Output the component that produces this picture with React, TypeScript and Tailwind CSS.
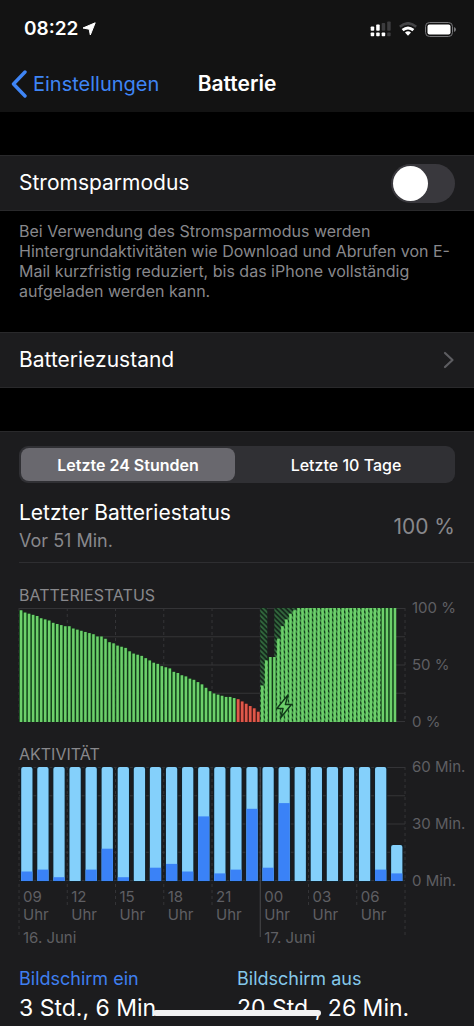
import { useState } from 'react'

// one value per quarter of an hour, in percent
const BATTERY = [
  98, 96, 95, 94, 93, 91, 90, 89, 87, 86, 85, 84, 84, 82, 81, 80, 79, 78, 77, 75, 75, 73, 70, 69,
  67, 66, 65, 62, 60, 59, 58, 56, 54, 52, 51, 49, 48, 47, 44, 43, 41, 40, 38, 37, 35, 33, 30, 27,
  25, 24, 23, 22, 22, 21, 20, 18, 16, 14, 12, 9, 32, 54, 57, 57, 73, 84, 90, 95, 98, 100, 100, 100,
  100, 100, 100, 100, 100, 100, 100, 100, 100, 100, 100, 100, 100, 100, 100, 100, 100, 100, 100, 100, 100, 100,
]

// minutes per hour: [screen on, total]
const ACTIVITY = [
  [5, 60], [6, 60], [2, 60], [0, 60], [6, 60], [17, 60], [2, 60], [0, 60],
  [7, 60], [9, 60], [5, 60], [34, 60], [4, 60], [6, 60], [38, 60], [7, 60],
  [41, 60], [0, 60], [0, 60], [0, 60], [0, 60], [0, 60], [6, 60], [4, 19],
]

const HOURS = ['09', '12', '15', '18', '21', '00', '03', '06']

const WIDTH = 384
const HEIGHT = 114
const GREEN = '#6dd06b'
const RED = '#e0584a'

const isLow = (i: number) => i > 53 && i < 60
const isCharging = (i: number) => i === 60 || i === 61 || (i > 63 && i < 90)

function Grid() {
  return (
    <g stroke="#343437" strokeWidth="1">
      {[0, 1, 2, 3, 4].map((i) => (
        <line key={`h${i}`} x1="0" x2={WIDTH} y1={0.5 + i * 28.25} y2={0.5 + i * 28.25} />
      ))}
      {[0, 1, 2, 3, 4, 5, 6, 7, 8].map((i) => (
        <line key={`v${i}`} x1={i * 48} x2={i * 48} y1="0" y2={HEIGHT} strokeDasharray="3 3" />
      ))}
    </g>
  )
}

function BatteryChart() {
  return (
    <svg
      viewBox={`0 0 ${WIDTH} ${HEIGHT}`}
      preserveAspectRatio="none"
      className="block h-[114px] w-full overflow-visible"
      role="img"
      aria-label="Batteriestatus"
    >
      <defs>
        <pattern id="hatch" width="5" height="5" patternUnits="userSpaceOnUse">
          <rect width="5" height="5" fill="#32683d" />
          <path d="M-1 -1L6 6M-1 4L1 6M4 -1L6 1" stroke="#14261b" strokeWidth="1.7" />
        </pattern>
        <pattern id="hatch-bright" width="5" height="5" patternUnits="userSpaceOnUse">
          <rect width="5" height="5" fill="#4fa653" />
          <path d="M-1 -1L6 6M-1 4L1 6M4 -1L6 1" stroke="#0f3f18" strokeWidth="1.9" />
        </pattern>
      </defs>
      <Grid />
      <rect x="240" y="0" width="7" height={HEIGHT} fill="url(#hatch)" />
      <rect x="254" y="0" width="106" height={HEIGHT} fill="url(#hatch)" />
      {BATTERY.map((value, i) => {
        const h = (value / 100) * HEIGHT
        return (
          <g key={i}>
            <rect
              x={i * 4}
              y={HEIGHT - h}
              width={i === BATTERY.length - 1 ? 3 : 4}
              height={h}
              fill={isLow(i) ? '#5a1f1c' : isCharging(i) ? 'url(#hatch-bright)' : '#12461b'}
            />
            <rect x={i * 4 + 0.8} y={HEIGHT - h} width="2.5" height={h} fill={isLow(i) ? RED : GREEN} />
          </g>
        )
      })}
      <path
        d="M267.5 87L256.500 100.500h6.200L260.500 109.500 271 96.500h-6z"
        fill={GREEN}
        stroke="#103a18"
        strokeWidth="1.4"
        strokeLinejoin="round"
      />
    </svg>
  )
}

function ActivityChart() {
  return (
    <svg
      viewBox={`0 0 ${WIDTH} ${HEIGHT}`}
      preserveAspectRatio="none"
      className="block h-[114px] w-full overflow-visible"
      role="img"
      aria-label="Aktivität"
    >
      <Grid />
      {/* ticks that run down beside the hour labels */}
      <g stroke="#343437" strokeWidth="1">
        {[0, 1, 2, 3, 4, 6, 7, 8].map((i) => (
          <line
            key={i}
            x1={i * 48}
            x2={i * 48}
            y1={HEIGHT + 3}
            y2={i % 8 === 0 ? HEIGHT + 54 : HEIGHT + 26}
            strokeDasharray="3 3"
          />
        ))}
      </g>
      {ACTIVITY.map(([on, total], i) => {
        const top = HEIGHT - (total / 60) * HEIGHT
        const onHeight = (on / 60) * HEIGHT
        const x = i * 16 + 2.2
        return (
          <g key={i}>
            <rect x={x - 1} y={top} width="13.2" height={HEIGHT - top + 1} fill="#10202a" />
            <path d={`M${x} ${HEIGHT}V${top + 2}q0 -2 2 -2h7.2q2 0 2 2V${HEIGHT}z`} fill="#84d0fb" />
            <rect x={x} y={HEIGHT - onHeight} width="11.2" height={onHeight} fill="#3a82f7" />
          </g>
        )
      })}
      <line x1="240" x2="240" y1="0" y2={HEIGHT + 56} stroke="#48484b" strokeWidth="1" />
    </svg>
  )
}

function Scale({ labels }: { labels: string[] }) {
  return (
    <div className="-my-2 flex w-[69px] shrink-0 flex-col justify-between pl-[7px] text-[15px] leading-4 text-[#5f5f63]">
      {labels.map((label) => (
        <span key={label}>{label}</span>
      ))}
    </div>
  )
}

function StatusBar() {
  return (
    <div className="flex h-[58px] items-center justify-between pl-6 pr-[18px]">
      <div className="flex items-center gap-1 text-[19px] font-semibold">
        <span>08:22</span>
        <svg width="14" height="14" viewBox="0 0 14 14" fill="#fff" aria-hidden="true">
          <path d="M13.200.8L8.300 13 7.200 7.200 1 6z" stroke="#fff" strokeWidth="1" strokeLinejoin="round" />
        </svg>
      </div>
      <div className="flex items-center gap-2">
        <svg width="21" height="16" viewBox="0 0 21 16" fill="#fff" aria-hidden="true">
          <rect x=".7" y="5.500" width="3.500" height="4.200" rx=".8" />
          <rect x="6.200" y="3.500" width="3.500" height="6.200" rx=".8" />
          <rect x="11.700" y="2" width="3.500" height="7.700" rx=".8" fill="#3c3c3e" />
          <rect x="17.200" y=".5" width="3.500" height="9.200" rx=".8" fill="#3c3c3e" />
          <rect x=".7" y="11.500" width="3.500" height="3.800" rx=".8" />
          <rect x="6.200" y="11.500" width="3.500" height="3.800" rx=".8" />
          <rect x="11.700" y="11.500" width="3.500" height="3.800" rx=".8" />
          <rect x="17.200" y="11.500" width="3.500" height="3.800" rx=".8" fill="#3c3c3e" />
        </svg>
        <svg width="18" height="14" viewBox="0 0 18 14" fill="none" aria-hidden="true">
          <path d="M.8 4.800Q9 -2.200 17.200 4.800" stroke="#454547" strokeWidth="2.600" />
          <path d="M3.600 8.200Q9 3.600 14.400 8.200" stroke="#fff" strokeWidth="2.900" />
          <path d="M6 10.600Q9 8 12 10.600L9 13.800z" fill="#fff" />
        </svg>
        <svg width="31" height="15" viewBox="0 0 31 15" aria-hidden="true">
          <rect x=".5" y=".5" width="27" height="14" rx="4" fill="none" stroke="#77777a" />
          <rect x="2.500" y="2.500" width="23" height="10" rx="2" fill="#fff" />
          <path d="M29 5q2 .8 2 2.500t-2 2.500z" fill="#77777a" />
        </svg>
      </div>
    </div>
  )
}

export default function App() {
  const [lowPower, setLowPower] = useState(false)
  const [range, setRange] = useState(0)

  return (
    <div className="h-screen overflow-hidden bg-black font-['Inter',sans-serif] text-white">
      <header className="h-28 bg-[#131313]">
        <StatusBar />
        <div className="grid h-[52px] grid-cols-[1fr_auto_1fr] items-center px-[11px]">
          <a href="#einstellungen" className="flex items-center gap-1.5 text-xl text-[#3f85f5]">
            <svg width="16" height="28" viewBox="0 0 16 28" fill="none" aria-hidden="true">
              <path d="M14 2L2.500 14 14 26" stroke="currentColor" strokeWidth="3.400" strokeLinecap="round" strokeLinejoin="round" />
            </svg>
            Einstellungen
          </a>
          <h1 className="text-[21px] font-semibold">Batterie</h1>
        </div>
      </header>

      <main>
        <section className="mt-[43px]">
          <div className="flex h-14 items-center justify-between border-y border-[#29292b] bg-[#1c1c1e] px-[19px]">
            <label htmlFor="low-power" className="text-[21px]">Stromsparmodus</label>
            <span className="relative flex h-[39px] w-16">
              <input
                id="low-power"
                type="checkbox"
                role="switch"
                checked={lowPower}
                onChange={(e) => setLowPower(e.target.checked)}
                className="peer h-full w-full appearance-none rounded-full bg-[#39383d] checked:bg-[#30d158]"
              />
              <span className="pointer-events-none absolute left-0.5 top-0.5 size-[35px] rounded-full bg-white peer-checked:left-[27px]" />
            </span>
          </div>
          <p className="px-[19px] pt-2.5 text-base leading-5 text-[#88888c]">
            Bei Verwendung des Stromsparmodus werden Hintergrundaktivitäten wie Download und Abrufen von E-Mail kurzfristig reduziert, bis das iPhone vollständig aufgeladen werden kann.
          </p>
        </section>

        <a
          href="#batteriezustand"
          className="mt-[31px] flex h-14 items-center justify-between border-y border-[#29292b] bg-[#1c1c1e] px-[19px] text-[21px]"
        >
          Batteriezustand
          <svg width="12" height="18" viewBox="0 0 12 18" fill="none" aria-hidden="true">
            <path d="M2 2l7.500 7L2 16" stroke="#5d5d61" strokeWidth="2.200" strokeLinecap="round" strokeLinejoin="round" />
          </svg>
        </a>

        <section className="mt-[43px] border-t border-[#29292b] bg-[#1c1c1e] pb-10 pl-[19px] pt-3.5">
          <div className="mr-[19px] grid h-[37px] grid-cols-2 gap-1 rounded-[9px] bg-[#303034] p-0.5 text-base">
            {['Letzte 24 Stunden', 'Letzte 10 Tage'].map((label, i) => (
              <button
                key={label}
                type="button"
                aria-pressed={range === i}
                onClick={() => setRange(i)}
                className={range === i ? 'rounded-lg bg-[#69686e] font-semibold' : 'rounded-lg font-medium'}
              >
                {label}
              </button>
            ))}
          </div>

          <div className="flex h-20 items-center justify-between border-b border-[#2e2e31] pr-[19px] pt-2">
            <div>
              <h2 className="text-[21px] leading-7">Letzter Batteriestatus</h2>
              <p className="text-lg leading-7 text-[#88888c]">Vor 51 Min.</p>
            </div>
            <span className="text-[21px] text-[#88888c]">100 %</span>
          </div>

          <h3 className="mt-[22px] text-base leading-5 text-[#88888c]">BATTERIESTATUS</h3>
          <div className="mt-[3px] flex">
            <div className="flex-1"><BatteryChart /></div>
            <Scale labels={['100 %', '50 %', '0 %']} />
          </div>

          <h3 className="mt-[22px] text-base leading-5 text-[#88888c]">AKTIVITÄT</h3>
          <div className="mt-[3px] flex">
            <div className="flex-1"><ActivityChart /></div>
            <Scale labels={['60 Min.', '30 Min.', '0 Min.']} />
          </div>

          <div className="mr-[69px] text-[15px] text-[#5f5f63]">
            <div className="grid grid-cols-8 leading-[18px]">
              {HOURS.map((hour) => (
                <div key={hour} className="pl-1 pt-[7px]">
                  {hour}
                  <br />
                  Uhr
                </div>
              ))}
            </div>
            <div className="grid grid-cols-[5fr_3fr] pt-0.5 leading-6">
              <span className="pl-1">16. Juni</span>
              <span className="pl-1">17. Juni</span>
            </div>
          </div>

          <dl className="mr-[19px] mt-[17px] grid grid-cols-2">
            <div>
              <dt className="text-lg leading-6 text-[#3f7ff0]">Bildschirm ein</dt>
              <dd className="text-[23px] leading-[34px]">3 Std., 6 Min.</dd>
            </div>
            <div>
              <dt className="text-lg leading-6 text-[#84c8ea]">Bildschirm aus</dt>
              <dd className="text-[23px] leading-[34px]">20 Std., 26 Min.</dd>
            </div>
          </dl>
        </section>
      </main>

      <div className="fixed bottom-2.5 left-1/2 h-1.5 w-[168px] -translate-x-1/2 rounded-full bg-[#f2f2f2]" />
    </div>
  )
}
